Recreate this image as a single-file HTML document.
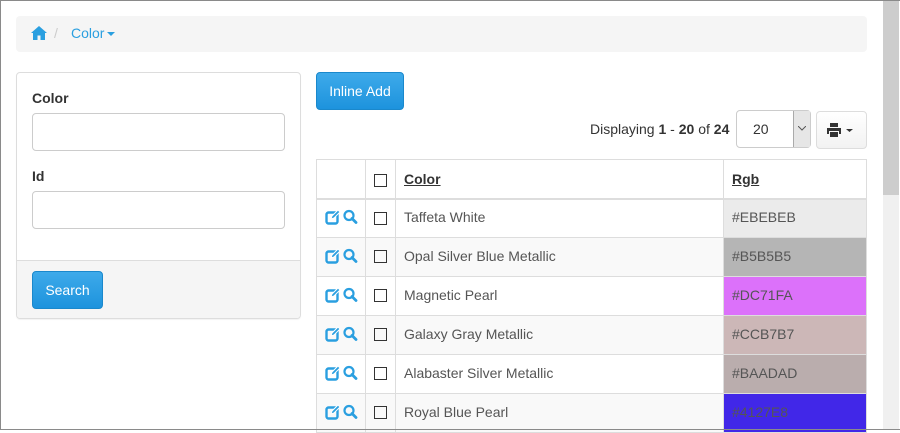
<!DOCTYPE html>
<html><head><style>
*{box-sizing:border-box;margin:0;padding:0}
html,body{width:900px;height:430px;overflow:hidden;background:#fff;font-family:"Liberation Sans",sans-serif;font-size:14px;color:#555}
.frame{position:absolute;left:0;top:0;width:900px;height:430px;border:1px solid #8a8a8a;border-right:none;z-index:10;pointer-events:none}
.sb{position:absolute;left:883px;top:1px;width:16px;height:428px;background:#f0f0f0}
.sb div{width:16px;height:194px;background:#cdcdcd}
.bc{position:absolute;left:16px;top:16px;width:851px;height:36px;background:#f5f5f5;border-radius:4px}
.abs{position:absolute}
.panel{position:absolute;left:16px;top:72px;width:285px;height:247px;border:1px solid #ddd;border-radius:4px;box-shadow:0 1px 1px rgba(0,0,0,.05);overflow:hidden}
.lbl{position:absolute;left:15px;font-weight:bold;color:#333;font-size:14px}
.inp{position:absolute;left:15px;width:253px;height:38px;border:1px solid #ccc;border-radius:4px}
.foot{position:absolute;left:0;top:187px;width:285px;height:60px;background:#f5f5f5;border-top:1px solid #ddd}
.btn{position:absolute;background:linear-gradient(#3eaaea,#1d93dd);border:1px solid #1a88cc;border-radius:4px;color:#fff;font-size:14px;text-align:center}
table{position:absolute;left:316px;top:159px;border-collapse:collapse;width:551px}
td,th{border:1px solid #ddd;height:39px;padding:0 8px;text-align:left;font-size:14px}
td{height:39px;line-height:17px;padding-bottom:2px}
th{border-bottom:2px solid #ddd;height:39px;color:#333}
tr{height:39px}
th u{font-weight:bold}
tr.s td{background:#f9f9f9}
.cb{display:inline-block;width:13px;height:13px;border:1px solid #333;vertical-align:middle}
.ic{padding:0 0 4px 8px}
</style></head><body>
<div class="frame"></div>
<div class="bc">
<svg class="abs" style="left:15px;top:10px" width="16" height="14" viewBox="0 0 16 14"><path d="M8 0L0 7h2v7h4.5V9.5h3V14H14V7h2z" fill="#2a9fe0"/></svg>
<span class="abs" style="left:38px;top:9px;color:#ccc">/</span>
<span class="abs" style="left:55px;top:9px;color:#2a9fe0">Color</span>
<svg class="abs" style="left:91px;top:16px" width="8" height="5"><path d="M0 0h8L4 4z" fill="#2a9fe0"/></svg>
</div>
<div class="panel">
<div class="lbl" style="top:17px">Color</div>
<div class="inp" style="top:40px"></div>
<div class="lbl" style="top:95px">Id</div>
<div class="inp" style="top:118px"></div>
<div class="foot"><div class="btn" style="left:15px;top:10px;width:71px;height:38px;line-height:36px">Search</div></div>
</div>
<div class="btn" style="left:316px;top:72px;width:88px;height:38px;line-height:36px">Inline Add</div>
<div class="abs" style="left:590px;top:121px;color:#333">Displaying <b>1</b> - <b>20</b> of <b>24</b></div>
<div class="abs" style="left:736px;top:110px;width:75px;height:38px;border:1px solid #ccc;border-radius:4px;padding:10px 0 0 16px;color:#333">20
<div class="abs" style="right:0;top:0;width:17px;height:36px;background:#e6e6e6;border-left:1px solid #aaa"><svg class="abs" style="left:4px;top:15px" width="8" height="5"><path d="M0 0l4 4 4-4" stroke="#555" fill="none"/></svg></div></div>
<div class="abs" style="left:816px;top:111px;width:51px;height:38px;border:1px solid #ddd;border-radius:4px;background:linear-gradient(#fff,#f2f2f2)">
<svg class="abs" style="left:10px;top:11px" width="28" height="14"><path d="M3 0h8v4H3z M0 5h14v6h-2v-3H2v3H0z M3 9h8v5H3z" fill="#333"/><path d="M19 6h7l-3.5 3z" fill="#333"/></svg></div>
<table>
<tr><th style="width:49px"></th><th style="width:30px"><span class="cb"></span></th><th><u>Color</u></th><th style="width:143px"><u>Rgb</u></th></tr>
<tr><td class="ic">ICON</td><td><span class="cb"></span></td><td>Taffeta White</td><td style="background:#EBEBEB">#EBEBEB</td></tr>
<tr class="s"><td class="ic">ICON</td><td><span class="cb"></span></td><td>Opal Silver Blue Metallic</td><td style="background:#B5B5B5">#B5B5B5</td></tr>
<tr><td class="ic">ICON</td><td><span class="cb"></span></td><td>Magnetic Pearl</td><td style="background:#DC71FA">#DC71FA</td></tr>
<tr class="s"><td class="ic">ICON</td><td><span class="cb"></span></td><td>Galaxy Gray Metallic</td><td style="background:#CCB7B7">#CCB7B7</td></tr>
<tr><td class="ic">ICON</td><td><span class="cb"></span></td><td>Alabaster Silver Metallic</td><td style="background:#BAADAD">#BAADAD</td></tr>
<tr class="s"><td class="ic">ICON</td><td><span class="cb"></span></td><td>Royal Blue Pearl</td><td style="background:#4127E8">#4127E8</td></tr>
</table>
<div class="sb"><div></div></div>
<script>
var s='<svg width="34" height="16" viewBox="0 0 34 16" style="vertical-align:middle"><rect x="1.5" y="3.5" width="11" height="11" rx="2" fill="none" stroke="#2a9fe0" stroke-width="2.4"/><path d="M6 10l1-3 6-6 2 2-6 6z" fill="#2a9fe0" stroke="#fff" stroke-width="1"/><circle cx="24" cy="6.5" r="4.5" fill="none" stroke="#2a9fe0" stroke-width="2.2"/><path d="M27 9.5l4 4" stroke="#2a9fe0" stroke-width="2.8" stroke-linecap="round"/></svg>';
document.querySelectorAll('td.ic').forEach(function(t){t.innerHTML=s});
</script>
</body></html>
